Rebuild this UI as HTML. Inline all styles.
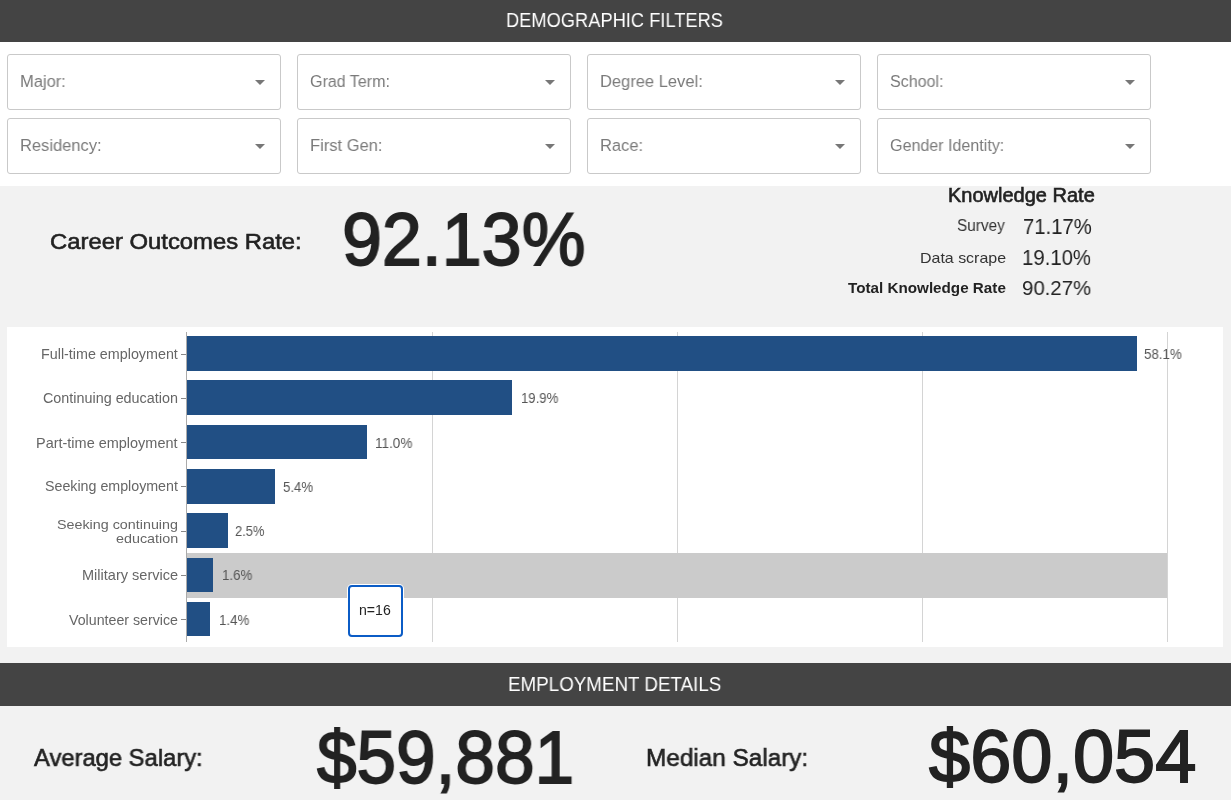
<!DOCTYPE html>
<html><head><meta charset="utf-8"><title>Career Outcomes Dashboard</title>
<style>
html,body{margin:0;padding:0}
body{width:1231px;height:800px;position:relative;overflow:hidden;background:#f2f2f2;font-family:"Liberation Sans",sans-serif}
.a{position:absolute}
.t{position:absolute;white-space:nowrap;line-height:1;transform-origin:0 0;font-family:"Liberation Sans",sans-serif;will-change:transform}
.hdr{position:absolute;left:0;width:1231px;background:#444444}
.fb{position:absolute;width:274px;height:56px;box-sizing:border-box;border:1px solid #c9c9c9;border-radius:3px;background:#fff}
.tri{position:absolute;width:0;height:0;border-left:5px solid transparent;border-right:5px solid transparent;border-top:5px solid #777}
.grid{position:absolute;top:332px;height:310px;width:1px;background:#d4d4d4}
.tick{position:absolute;left:181px;width:5px;height:1px;background:#888}
.bar{position:absolute;left:187px;height:34.5px;background:#214f84}
</style></head>
<body>
<div class="hdr" style="top:0;height:42px"></div>
<div class="a" style="left:0;top:42px;width:1231px;height:144px;background:#fff"></div>
<div class="fb" style="left:7px;top:54px"></div>
<div class="fb" style="left:297px;top:54px"></div>
<div class="fb" style="left:587px;top:54px"></div>
<div class="fb" style="left:877px;top:54px"></div>
<div class="fb" style="left:7px;top:118px"></div>
<div class="fb" style="left:297px;top:118px"></div>
<div class="fb" style="left:587px;top:118px"></div>
<div class="fb" style="left:877px;top:118px"></div>
<div class="tri" style="left:255px;top:80px"></div>
<div class="tri" style="left:545px;top:80px"></div>
<div class="tri" style="left:835px;top:80px"></div>
<div class="tri" style="left:1125px;top:80px"></div>
<div class="tri" style="left:255px;top:144px"></div>
<div class="tri" style="left:545px;top:144px"></div>
<div class="tri" style="left:835px;top:144px"></div>
<div class="tri" style="left:1125px;top:144px"></div>

<div class="a" style="left:7px;top:327px;width:1216px;height:320px;background:#fff"></div>
<div class="grid" style="left:432px"></div>
<div class="grid" style="left:677px"></div>
<div class="grid" style="left:922px"></div>
<div class="grid" style="left:1167px"></div>
<div class="a" style="left:187px;top:553.25px;width:980px;height:44.25px;background:#cbcbcb"></div>
<div class="a" style="left:186px;top:332px;width:1px;height:310px;background:#ababab"></div>
<div class="tick" style="top:354px"></div>
<div class="tick" style="top:398px"></div>
<div class="tick" style="top:442px"></div>
<div class="tick" style="top:486px"></div>
<div class="tick" style="top:531px"></div>
<div class="tick" style="top:575px"></div>
<div class="tick" style="top:619px"></div>
<div class="bar" style="top:336.20px;width:949.94px"></div>
<div class="bar" style="top:380.47px;width:325.37px"></div>
<div class="bar" style="top:424.74px;width:179.85px"></div>
<div class="bar" style="top:469.01px;width:88.29px"></div>
<div class="bar" style="top:513.28px;width:40.88px"></div>
<div class="bar" style="top:557.55px;width:26.16px"></div>
<div class="bar" style="top:601.82px;width:22.89px"></div>
<div class="a" style="left:348px;top:585px;width:55px;height:52px;box-sizing:border-box;border:2px solid #0b5cc6;border-radius:4px;background:#fff;box-shadow:0 0 0 1px #fff"></div>

<div class="hdr" style="top:663px;height:43px"></div>
<div class="t" style="left:506.00px;top:10.32px;font-size:20.945px;font-weight:400;color:#ffffff;transform:scaleX(0.8728);">DEMOGRAPHIC FILTERS</div>
<div class="t" style="left:508.00px;top:673.76px;font-size:20.364px;font-weight:400;color:#ffffff;transform:scaleX(0.9229);">EMPLOYMENT DETAILS</div>
<div class="t" style="left:20.40px;top:74.39px;font-size:16.727px;font-weight:400;color:#7a7a7a;transform:scaleX(0.9857);">Major:</div>
<div class="t" style="left:310.40px;top:73.29px;font-size:16.254px;font-weight:400;color:#7a7a7a;transform:scaleX(0.9870);">Grad Term:</div>
<div class="t" style="left:600.40px;top:74.39px;font-size:16.727px;font-weight:400;color:#7a7a7a;transform:scaleX(0.9870);">Degree Level:</div>
<div class="t" style="left:890.40px;top:73.29px;font-size:16.254px;font-weight:400;color:#7a7a7a;transform:scaleX(0.9870);">School:</div>
<div class="t" style="left:20.40px;top:138.39px;font-size:16.727px;font-weight:400;color:#7a7a7a;transform:scaleX(0.9870);">Residency:</div>
<div class="t" style="left:310.40px;top:138.39px;font-size:16.727px;font-weight:400;color:#7a7a7a;transform:scaleX(0.9870);">First Gen:</div>
<div class="t" style="left:600.40px;top:138.39px;font-size:16.727px;font-weight:400;color:#7a7a7a;transform:scaleX(0.9870);">Race:</div>
<div class="t" style="left:890.40px;top:137.29px;font-size:16.254px;font-weight:400;color:#7a7a7a;transform:scaleX(0.9882);">Gender Identity:</div>
<div class="t" style="left:50.20px;top:230.11px;font-size:22.898px;font-weight:400;color:#222222;transform:scaleX(1.0421);-webkit-text-stroke:0.6px #222222;">Career Outcomes Rate:</div>
<div class="t" style="left:342.20px;top:201.56px;font-size:74.695px;font-weight:400;color:#222222;transform:scaleX(0.9610);-webkit-text-stroke:1.8px #222222;">92.13%</div>
<div class="t" style="left:948.35px;top:185.53px;font-size:19.927px;font-weight:400;color:#222222;transform:scaleX(1.0049);-webkit-text-stroke:0.6px #222222;">Knowledge Rate</div>
<div class="t" style="left:957.45px;top:218.45px;font-size:16.537px;font-weight:400;color:#333333;transform:scaleX(0.9284);">Survey</div>
<div class="t" style="left:1023.10px;top:215.68px;font-size:22.109px;font-weight:400;color:#222222;transform:scaleX(0.9178);">71.17%</div>
<div class="t" style="left:919.67px;top:249.82px;font-size:15.564px;font-weight:400;color:#333333;transform:scaleX(1.0262);">Data scrape</div>
<div class="t" style="left:1022.35px;top:247.72px;font-size:21.527px;font-weight:400;color:#222222;transform:scaleX(0.9451);">19.10%</div>
<div class="t" style="left:848.20px;top:279.59px;font-size:15.127px;font-weight:700;color:#222222;transform:scaleX(1.0073);">Total Knowledge Rate</div>
<div class="t" style="left:1022.35px;top:277.74px;font-size:20.919px;font-weight:400;color:#222222;transform:scaleX(0.9756);">90.27%</div>
<div class="t" style="left:34.45px;top:745.56px;font-size:24.145px;font-weight:400;color:#222222;transform:scaleX(0.9850);-webkit-text-stroke:0.6px #222222;">Average Salary:</div>
<div class="t" style="left:317.25px;top:719.56px;font-size:74.695px;font-weight:400;color:#222222;transform:scaleX(0.9523);-webkit-text-stroke:1.8px #222222;">$59,881</div>
<div class="t" style="left:646.15px;top:746.24px;font-size:24.582px;font-weight:400;color:#222222;transform:scaleX(0.9894);-webkit-text-stroke:0.6px #222222;">Median Salary:</div>
<div class="t" style="left:929.45px;top:720.45px;font-size:73.640px;font-weight:400;color:#222222;transform:scaleX(1.0045);-webkit-text-stroke:1.8px #222222;">$60,054</div>
<div class="t" style="left:359.00px;top:604.48px;font-size:13.964px;font-weight:400;color:#222222;transform:scaleX(1.0105);">n=16</div>
<div class="t" style="left:41.15px;top:346.92px;font-size:14.109px;font-weight:400;color:#666666;transform:scaleX(1.0157);">Full-time employment</div>
<div class="t" style="left:43.45px;top:392.13px;font-size:13.710px;font-weight:400;color:#666666;transform:scaleX(1.0476);">Continuing education</div>
<div class="t" style="left:36.40px;top:435.67px;font-size:14.109px;font-weight:400;color:#666666;transform:scaleX(1.0266);">Part-time employment</div>
<div class="t" style="left:45.15px;top:480.38px;font-size:13.710px;font-weight:400;color:#666666;transform:scaleX(1.0386);">Seeking employment</div>
<div class="t" style="left:82.20px;top:568.29px;font-size:14.109px;font-weight:400;color:#666666;transform:scaleX(1.0313);">Military service</div>
<div class="t" style="left:69.25px;top:612.67px;font-size:14.109px;font-weight:400;color:#666666;transform:scaleX(1.0081);">Volunteer service</div>
<div class="t" style="left:57.45px;top:517.53px;font-size:13.428px;font-weight:400;color:#666666;transform:scaleX(1.0676);">Seeking continuing</div>
<div class="t" style="left:116.25px;top:531.53px;font-size:13.197px;font-weight:400;color:#666666;transform:scaleX(1.0871);">education</div>
<div class="t" style="left:1144.30px;top:348.09px;font-size:13.907px;font-weight:400;color:#555555;transform:scaleX(0.9586);">58.1%</div>
<div class="t" style="left:521.05px;top:391.29px;font-size:14.109px;font-weight:400;color:#555555;transform:scaleX(0.9337);">19.9%</div>
<div class="t" style="left:375.25px;top:435.67px;font-size:14.109px;font-weight:400;color:#555555;transform:scaleX(0.9586);">11.0%</div>
<div class="t" style="left:283.20px;top:480.71px;font-size:13.907px;font-weight:400;color:#555555;transform:scaleX(0.9518);">5.4%</div>
<div class="t" style="left:235.40px;top:525.09px;font-size:13.907px;font-weight:400;color:#555555;transform:scaleX(0.9294);">2.5%</div>
<div class="t" style="left:221.58px;top:568.29px;font-size:14.109px;font-weight:400;color:#555555;transform:scaleX(0.9464);">1.6%</div>
<div class="t" style="left:218.59px;top:612.67px;font-size:14.109px;font-weight:400;color:#555555;transform:scaleX(0.9464);">1.4%</div>
</body></html>
